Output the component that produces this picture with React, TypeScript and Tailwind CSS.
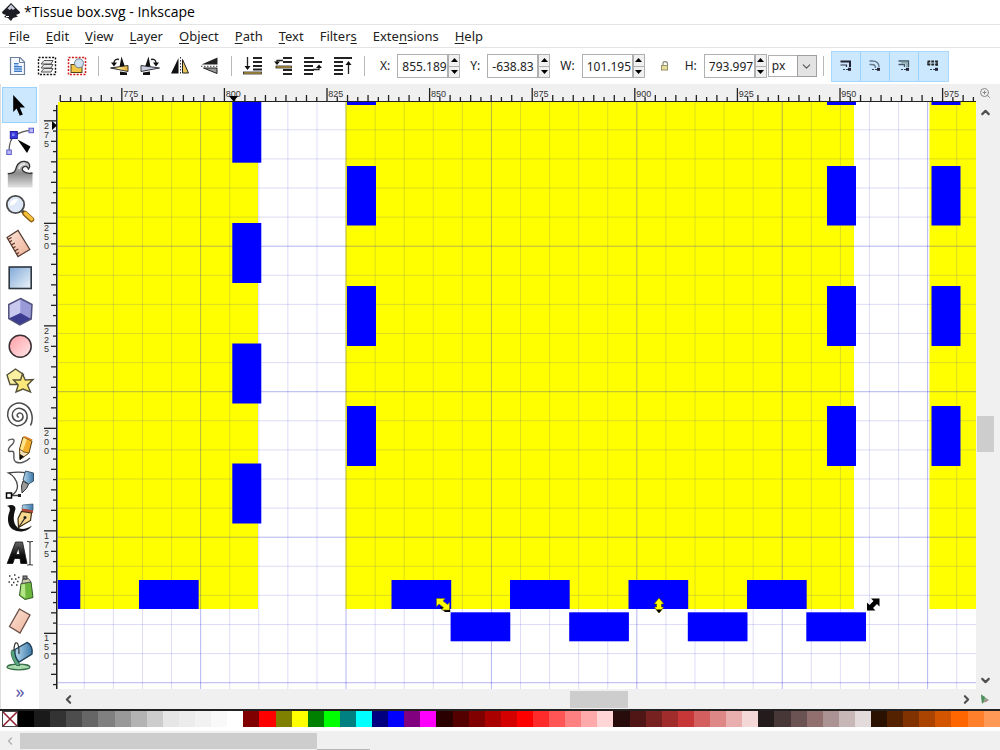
import React from "react";
import { ChevronDown, ChevronLeft, ChevronRight, ChevronUp, ZoomIn } from "lucide-react";

/* ---------- data ---------- */

const MENUS: [string, string, string][] = [
  ["", "F", "ile"],
  ["", "E", "dit"],
  ["", "V", "iew"],
  ["", "L", "ayer"],
  ["", "O", "bject"],
  ["", "P", "ath"],
  ["", "T", "ext"],
  ["Filter", "s", ""],
  ["Exte", "n", "sions"],
  ["", "H", "elp"],
];

const PALETTE =
  "000000 1a1a1a 333333 4d4d4d 666666 808080 999999 b3b3b3 cccccc e6e6e6 ececec f2f2f2 f9f9f9 ffffff 800000 ff0000 808000 ffff00 008000 00ff00 008080 00ffff 000080 0000ff 800080 ff00ff 2b0000 550000 800000 aa0000 d40000 ff0000 ff2a2a ff5555 ff8080 ffaaaa ffd5d5 280b0b 501616 782121 a02c2c c83737 d35f5f de8787 e9afaf f4d7d7 241c1c 483737 6c5353 916f6f ac9393 c8b7b7 e3dbdb 2b1100 552200 803300 aa4400 d45500 ff6600 ff7f2a ff9955".split(
    " ",
  );

type Box = [number, number, number, number];

const YELLOW: Box[] = [
  [0, 0, 200, 507],
  [287.5, 0, 508.5, 507],
  [871.5, 0, 400, 507],
];

const sideTabs = (x: number): Box[] => [
  [x, 0, 29, 3],
  [x, 64, 29, 59.5],
  [x, 184, 29, 60],
  [x, 304, 29, 60],
];

const BLUE: Box[] = [
  [174.3, 0, 29, 60.7],
  [174.3, 121, 29, 60],
  [174.3, 241.5, 29, 60],
  [174.3, 361.5, 29, 60],
  ...sideTabs(289),
  ...sideTabs(769),
  ...sideTabs(873.5),
  [0, 478, 22.3, 29],
  [81, 478, 59.7, 29],
  [333.5, 478, 59.7, 29],
  [452, 478, 59.7, 29],
  [570.5, 478, 59.7, 29],
  [689, 478, 59.7, 29],
  [392.6, 510.3, 59.7, 29],
  [511.2, 510.3, 59.7, 29],
  [629.8, 510.3, 59.7, 29],
  [748.3, 510.3, 59.7, 29],
];

/* ---------- icons ---------- */

const Svg = ({ size, children }: { size: number; children: React.ReactNode }) => (
  <svg width={size} height={size} viewBox={`0 0 ${size} ${size}`} fill="none" className="shrink-0" aria-hidden="true">
    {children}
  </svg>
);

const Defs = () => (
  <svg width="0" height="0" className="absolute" aria-hidden="true">
    <defs>
      <linearGradient id="gBlue" x1="0" y1="0" x2="1" y2="1">
        <stop offset="0" stopColor="#7fa9d6" />
        <stop offset="1" stopColor="#eef4fb" />
      </linearGradient>
      <linearGradient id="gRed" x1="0" y1="0" x2="1" y2="1">
        <stop offset="0" stopColor="#ff9ca4" />
        <stop offset="1" stopColor="#ffe9ea" />
      </linearGradient>
      <linearGradient id="gSkin" x1="0" y1="0" x2="1" y2="1">
        <stop offset="0" stopColor="#fbe6da" />
        <stop offset="1" stopColor="#eeb095" />
      </linearGradient>
      <linearGradient id="gGrey" x1="0" y1="0" x2="0" y2="1">
        <stop offset="0" stopColor="#d8d8d8" />
        <stop offset="0.45" stopColor="#8a8a8a" />
        <stop offset="1" stopColor="#e2e2e2" />
      </linearGradient>
      <linearGradient id="gGold" x1="0" y1="0" x2="1" y2="0">
        <stop offset="0" stopColor="#3a3020" />
        <stop offset="0.45" stopColor="#ffe9a0" />
        <stop offset="1" stopColor="#e0ac30" />
      </linearGradient>
      <linearGradient id="gSteel" x1="0" y1="0" x2="1" y2="0">
        <stop offset="0" stopColor="#b7dbf0" />
        <stop offset="1" stopColor="#3c78a8" />
      </linearGradient>
      <linearGradient id="gText" x1="0" y1="0" x2="0" y2="1">
        <stop offset="0" stopColor="#666" />
        <stop offset="0.6" stopColor="#111" />
        <stop offset="1" stopColor="#000" />
      </linearGradient>
    </defs>
  </svg>
);

const TOOLS: { name: string; art: React.ReactNode }[] = [
  {
    name: "Select and transform objects",
    art: <path d="M8.2 5V22L11.6 18.6L14.8 25.8L17.8 24.4L14.8 17.4H20Z" fill="#000" />,
  },
  {
    name: "Edit paths by nodes",
    art: (
      <>
        <path d="M4 26C4 17 6 12 10 9.500C15 6 20 4.500 26 4.300" stroke="#555" strokeWidth="1.200" />
        <rect x="5.300" y="5.500" width="7" height="7" fill="#3a3ad8" stroke="#2020a8" />
        <rect x="7" y="7.500" width="2.500" height="2.500" fill="#7d8cf5" />
        <rect x="24" y="2.200" width="4.500" height="4.500" fill="#b9b9f6" stroke="#5c5cd0" />
        <rect x="1.800" y="24" width="4.500" height="4.500" fill="#b9b9f6" stroke="#5c5cd0" />
        <path d="M12.500 13.500L25.500 20.500L22 27Z" fill="#000" />
      </>
    ),
  },
  {
    name: "Tweak objects",
    art: (
      <>
        <path d="M2.800 13.500C9 14 10.500 11 11.500 7C12.800 2.500 17 1 20 1.500C24.500 2 26 6 23.500 9C22.500 7 21 6 19 7C16.500 9 17.500 14 27.500 13V27.500H2.800Z" fill="url(#gGrey)" />
        <path d="M2.800 13.500C9 14 10.500 11 11.500 7C12.800 2.500 17 1 20 1.500C24.500 2 26 6 23.500 9C22.500 7 21 5.500 18.500 7C15.500 9 18 14.500 27.500 13" stroke="#333" strokeWidth="1.300" />
        <path d="M14 9C14 6 17 4 20 4" stroke="#eee" strokeWidth="1.500" />
      </>
    ),
  },
  {
    name: "Zoom in or out",
    art: (
      <>
        <path d="M17 17L21 20.500" stroke="#444" strokeWidth="3" />
        <path d="M20 19.500L26.500 25.500" stroke="#8a5c10" strokeWidth="5.500" strokeLinecap="round" />
        <path d="M20.500 19.500L26.500 25" stroke="#f3c13c" strokeWidth="3.600" strokeLinecap="round" />
        <circle cx="10.500" cy="10.500" r="8.700" fill="#dfe9f8" stroke="#4a4a4a" strokeWidth="1.800" />
        <path d="M4.500 11.500C5 7.500 8 4.500 13 5C11 9.500 8 11.500 4.500 11.500Z" fill="#fff" />
      </>
    ),
  },
  {
    name: "Measurement tool",
    art: (
      <>
        <path d="M2 8.500L13 1.500L24.800 20.500L13 27.500Z" fill="url(#gSkin)" stroke="#5a4038" strokeWidth="1.300" />
        <path d="M3 10.500L6.500 8.500M4.500 13L7 11.500M6.300 16L9.800 14M8 19L10.500 17.500M9.800 22L13.300 20M11.500 25L14 23.500" stroke="#5a3020" strokeWidth="1.200" />
      </>
    ),
  },
  {
    name: "Create rectangles and squares",
    art: <rect x="4.200" y="4" width="22" height="21.500" fill="url(#gBlue)" stroke="#2e3640" strokeWidth="1.600" />,
  },
  {
    name: "Create 3D boxes",
    art: (
      <>
        <path d="M15.500 1.500L27 7.500L26.200 22L14.800 28L3.800 21.500V7.500Z" fill="#a9a9e4" />
        <path d="M15.500 1.500V16L3.800 21.500V7.500Z" fill="#c9c9f0" />
        <path d="M15.500 1.500L27 7.500L26.200 22L15.500 16Z" fill="#9a9ad8" />
        <path d="M15.500 16L26.200 22L14.800 28L3.800 21.500Z" fill="#3c3c90" />
        <path d="M15.500 1.500L27 7.500L26.200 22L14.800 28L3.800 21.500V7.500Z" stroke="#50507c" strokeWidth="1.500" />
      </>
    ),
  },
  {
    name: "Create circles, ellipses and arcs",
    art: <circle cx="15.200" cy="14.200" r="11" fill="url(#gRed)" stroke="#3c3034" strokeWidth="1.500" />,
  },
  {
    name: "Create stars and polygons",
    art: (
      <>
        <path d="M10.500 3L18.500 8.500L15.500 18.500H5L2 9Z" fill="#faf0a0" stroke="#57523a" strokeWidth="1.400" />
        <path d="M17.500 8L20.300 14L28 13.500L22.500 19L25.500 26L18 23L11 26L13.200 19L8.500 14H15.500Z" fill="#fbe878" stroke="#57523a" strokeWidth="1.400" />
      </>
    ),
  },
  {
    name: "Create spirals",
    art: (
      <path
        d="M14 17C12.500 17.500 11.500 15.500 12.500 14.200C14 12 17.500 13 18 16C18.500 20 14 22.300 10.500 20.500C6.500 18.300 6.500 12.500 9.500 10C14 6.500 21 9 22 15C23 22 17 26.500 11 25.500C4.500 24 1.500 17 3 11.500C5 4.500 12.500 1.500 18.500 4C26 7 29.500 17 25.500 25.500"
        stroke="#4a4a4a"
        strokeWidth="1.500"
      />
    ),
  },
  {
    name: "Draw freehand lines",
    art: (
      <>
        <path d="M3 5.500C6 3.500 9.500 3.500 9 6.500C8.500 10 2.500 12 3.500 15.500C4 18 7 15 8.500 17C10 20 7 25 11 27C15 29 21 27 25 23" stroke="#555" strokeWidth="1.400" />
        <path d="M18 2L27 6L24 18L15 24.500L14.500 14Z" fill="#f3ad28" stroke="#5b4016" />
        <path d="M18.500 2.500L22 4.500L17.500 16.500L14.800 15Z" fill="#ffe48a" />
        <path d="M14.500 14L19 17L24 18L15 24.500Z" fill="#f5dfb5" stroke="#5b4016" strokeWidth="0.800" />
        <path d="M14.800 19L19 21.500L14.800 25Z" fill="#111" />
        <path d="M20 1L27.500 4.500L27 6L18 2Z" fill="#e0862c" />
      </>
    ),
  },
  {
    name: "Draw Bezier curves and straight lines",
    art: (
      <>
        <path d="M4 26.500H15M22 4C15 2.500 9 3 3.500 4C8 6 12.500 12 12.500 17C12.500 22 9 25 6 26.500" stroke="#444" strokeWidth="1.300" />
        <path d="M20.500 2L28.500 4V12L23.500 15L18 11Z" fill="url(#gSteel)" stroke="#3c5468" />
        <path d="M18 12L23.500 15.500L21.500 19.500L17 24L16.500 17Z" fill="#9a9a9a" stroke="#333" />
        <rect x="1.500" y="24" width="5" height="5" fill="#fff" stroke="#000" strokeWidth="1.500" />
        <rect x="13" y="25" width="3" height="3" fill="#222" />
      </>
    ),
  },
  {
    name: "Draw calligraphic or brush strokes",
    art: (
      <>
        <path d="M2 3C7 0.500 12 2.500 10 7.500C8 13.500 8 20.500 12.500 24.500C16 27 22 26 27 22.500C23 29 14 30 8 26.500C1.500 22 2.500 13.500 4.500 8.500C5.500 5.500 4.500 3.500 2 3Z" fill="#111" />
        <path d="M17.500 2L28 1V7.500L17 6.500Z" fill="url(#gSteel)" stroke="#35506a" strokeWidth="0.700" />
        <path d="M17.500 5.500L28 7.500V10L16 9Z" fill="#b84838" />
        <path d="M16.500 8.500L26.500 10L25.500 17.500L13.500 24.500L13 15.500Z" fill="#f7d88e" stroke="#3c2c10" strokeWidth="1.200" />
        <path d="M13.800 24L20 15" stroke="#222" strokeWidth="1.200" />
        <circle cx="20" cy="14.500" r="1.500" fill="#222" />
      </>
    ),
  },
  {
    name: "Create and edit text objects",
    art: (
      <>
        <path d="M10.500 4H17.500L22 25.500H15.800L15 20.500H9.500L7.800 25.500H2.200ZM13.500 9.500L11 16.500H14.800Z" fill="url(#gText)" stroke="#111" strokeWidth="0.800" />
        <path d="M22 3.500H24L25 4.500L26 3.500H28M25 4.500V26M22 27H24L25 26L26 27H28" stroke="#444" strokeWidth="1.200" />
      </>
    ),
  },
  {
    name: "Spray objects",
    art: (
      <>
        <path d="M16 11.500L26 10L28 25.500L20 27.500L14.500 23.500Z" fill="#6db83c" stroke="#335a24" />
        <path d="M16.500 12.500L20 12L20.500 26L15.500 23Z" fill="#b7e68a" />
        <path d="M17 11.500L17.500 7.500L23.500 6.500L26 10Z" fill="#c9cfa8" stroke="#555" />
        <rect x="18" y="4" width="4" height="3" fill="#888" stroke="#333" />
        <path d="M4 4H5.500M9 3H10.500M13 5.500H14.500M6 7H7.500M10 7H11.500M3.500 10H5M8 10.500H9.500M12 9.500H13.500M6 13H7.500M11 13H12.500" stroke="#333" strokeWidth="1.500" />
      </>
    ),
  },
  {
    name: "Erase existing paths",
    art: <path d="M14.500 2L25 8L15 26L4.500 19.500Z" fill="url(#gSkin)" stroke="#6b5048" strokeWidth="1.300" />,
  },
  {
    name: "Fill bounded areas",
    art: (
      <>
        <ellipse cx="13.500" cy="26" rx="11.500" ry="2.800" fill="#a8dcae" stroke="#3a6e48" strokeWidth="1.300" />
        <path d="M7 9C4.500 12 8 20 11.500 24.500H15C12 19 10 13 11 9Z" fill="#56a87c" stroke="#2c5c46" strokeWidth="0.800" />
        <path d="M10 8.500L22 1.500C26 3 28 8 27 13L14 21C11 18 9.500 13 10 8.500Z" fill="url(#gSteel)" stroke="#1f4058" strokeWidth="1.400" />
        <path d="M9 10C9 3 10.500 1 12 2C13.500 3 14 8 14 13" stroke="#333" strokeWidth="1.200" />
      </>
    ),
  },
];

type Cmd = { name: string; art: React.ReactNode };

const SELECT_CMDS: Cmd[] = [
  {
    name: "Select all",
    art: (
      <>
        <path d="M5.500 3.500H15L19.500 8V20.500H5.500Z" fill="#f4f8fd" stroke="#6d7f9a" strokeWidth="1.200" />
        <path d="M14.500 3.500V8.500H19.500" stroke="#6d7f9a" />
        <path d="M9 9H13.500V12H17V18H9Z" fill="#9cc2ee" />
        <path d="M9 9.500H13.500M9 12.500H17M9 15H17M9 17.500H17" stroke="#3f78c0" strokeWidth="1.200" />
      </>
    ),
  },
  {
    name: "Select all in all layers",
    art: (
      <>
        <rect x="3.500" y="3.500" width="17" height="17" stroke="#111" strokeWidth="1.400" strokeDasharray="2 1.400" />
        <path d="M6 10L9 6.500H18L16 10ZM6 14L9 10.500H18L16 14ZM6 18L9 14.500H18L16 18Z" fill="#e8e8e8" stroke="#555" />
      </>
    ),
  },
  {
    name: "Deselect",
    art: (
      <>
        <rect x="3.500" y="3.500" width="17" height="17" stroke="#d01818" strokeWidth="1.500" strokeDasharray="2 1.400" />
        <rect x="6" y="10.500" width="11" height="8" fill="#f2c64a" stroke="#54451c" />
        <circle cx="14" cy="9.300" r="4.500" fill="#cfe0f0" stroke="#708090" />
      </>
    ),
  },
];

const TRANSFORM_CMDS: Cmd[] = [
  {
    name: "Rotate 90 degrees CCW",
    art: (
      <>
        <path d="M13.500 2.500L17 13H11.500Z" fill="#111" />
        <path d="M2.500 14L20 11.500V17.500Z" fill="url(#gGold)" stroke="#222" strokeWidth="0.900" />
        <path d="M12 17.500L19 18.500V21H12Z" fill="#111" />
        <path d="M11 5.500C8.500 4.500 6 6 6 9" stroke="#222" strokeWidth="1.400" />
        <path d="M3 8.500H9L6 12.500Z" fill="#111" />
      </>
    ),
  },
  {
    name: "Rotate 90 degrees CW",
    art: (
      <>
        <path d="M10.500 2.500L7 13H12.500Z" fill="#111" />
        <path d="M21.500 14L3 11.500V17.500Z" fill="#c9cede" stroke="#222" strokeWidth="0.900" />
        <path d="M12 17.500L5 18.500V21H12Z" fill="#111" />
        <path d="M13 5.500C15.500 4.500 18 6 18 9" stroke="#222" strokeWidth="1.400" />
        <path d="M21 8.500H15L18 12.500Z" fill="#111" />
      </>
    ),
  },
  {
    name: "Flip horizontal",
    art: (
      <>
        <path d="M10.500 4V19.500H3Z" fill="#111" />
        <path d="M14.500 5.500V19H20.500Z" fill="#eac75c" stroke="#222" />
        <path d="M12.500 3V21" stroke="#333" strokeDasharray="1.500 1.500" />
      </>
    ),
  },
  {
    name: "Flip vertical",
    art: (
      <>
        <path d="M3.500 10.500L19.500 3.500V10.500Z" fill="#222" />
        <path d="M5.500 14L19 19.500V14Z" fill="#999" stroke="#222" />
        <path d="M3 12.300H20.500" stroke="#444" strokeDasharray="1.500 1.500" />
      </>
    ),
  },
];

const ORDER_CMDS: Cmd[] = [
  {
    name: "Lower selection to bottom",
    art: (
      <>
        <path d="M12 4H21M12 8H21M12 12H21M12 15.500H21" stroke="#222" strokeWidth="2" />
        <rect x="2.500" y="18" width="18" height="2" fill="#d9b54a" stroke="#222" strokeWidth="0.800" />
        <path d="M6.500 3V14" stroke="#222" strokeWidth="1.300" />
        <path d="M3.500 12H9.500L6.500 16Z" fill="#111" />
      </>
    ),
  },
  {
    name: "Lower selection one step",
    art: (
      <>
        <path d="M12 4H21M12 8H21M12 16H21M12 20H21" stroke="#222" strokeWidth="2" />
        <rect x="5" y="12" width="15.500" height="2" fill="#d9b54a" stroke="#222" strokeWidth="0.800" />
        <path d="M12 6.500H6V8" stroke="#222" strokeWidth="1.300" />
        <path d="M3 7.500H9L6 11Z" fill="#111" />
      </>
    ),
  },
  {
    name: "Raise selection one step",
    art: (
      <>
        <path d="M3 4H13M3 8H21M3 12H12M3 16H13M3 20H12" stroke="#222" strokeWidth="2" />
        <path d="M12 15.500H18V13" stroke="#222" strokeWidth="1.300" />
        <path d="M15 14H21L18 10.500Z" fill="#111" />
      </>
    ),
  },
  {
    name: "Raise selection to top",
    art: (
      <>
        <path d="M3 4H21M3 8H12M3 12H12M3 16H12M3 20H12" stroke="#222" strokeWidth="2" />
        <path d="M17.500 9V20" stroke="#222" strokeWidth="1.300" />
        <path d="M14.500 11H20.500L17.500 7Z" fill="#111" />
      </>
    ),
  },
];

const TOGGLES: Cmd[] = [
  {
    name: "Scale stroke width",
    art: (
      <>
        <path d="M6.500 7.500H16V13" stroke="#223" strokeWidth="2" />
        <path d="M6.500 11H12.500V13" stroke="#334" strokeWidth="1.200" />
      </>
    ),
  },
  {
    name: "Scale rounded corners",
    art: <path d="M6.500 7H9C14 7 16 9.500 16 13M6.500 10.500H9C11.500 10.500 12.500 12 12.500 14" stroke="#678" strokeWidth="1.300" />,
  },
  {
    name: "Transform gradients",
    art: (
      <>
        <path d="M6.500 7H16.500V13M6.500 10.500H12.500V13" stroke="#456" strokeWidth="1.300" />
        <path d="M9 8.700H15V13" stroke="#8aa" strokeWidth="1.800" />
      </>
    ),
  },
  {
    name: "Transform patterns",
    art: (
      <>
        <path d="M6.500 7.500H17M6.500 10.500H17" stroke="#222" strokeWidth="2" strokeDasharray="2.800 1" />
        <path d="M7 8V11M16 8V12" stroke="#222" strokeWidth="1.200" />
      </>
    ),
  },
];

/* ---------- toolbar pieces ---------- */

const Separator = () => <div className="mx-[6px] h-[20px] w-px shrink-0 bg-[#b8b8b8]" />;

const CmdGroup = ({ items }: { items: Cmd[] }) => (
  <div className="flex shrink-0">
    {items.map((c) => (
      <button key={c.name} type="button" aria-label={c.name} className="flex h-[30px] w-[30px] items-center justify-center">
        <Svg size={24}>{c.art}</Svg>
      </button>
    ))}
  </div>
);

const Spin = ({ id, label, value }: { id: string; label: string; value: string }) => (
  <div className="flex shrink-0 items-center gap-[7px]">
    <label htmlFor={id} className="text-[#222]">
      {label}:
    </label>
    <div className="flex h-[24px]">
      <input
        id={id}
        defaultValue={value}
        className="h-[24px] w-[51px] border border-[#b0b0b0] bg-white pl-[4px] text-[12px] text-[#222] outline-none"
      />
      <div className="flex w-[12px] flex-col border border-[#b0b0b0] bg-[#f0f0f0]">
        <button type="button" aria-label={`Increase ${label}`} className="flex flex-1 items-center justify-center border-b border-[#b0b0b0]">
          <svg width="7" height="4" viewBox="0 0 7 4" aria-hidden="true">
            <path d="M0 4L3.500 0L7 4Z" fill="#000" />
          </svg>
        </button>
        <button type="button" aria-label={`Decrease ${label}`} className="flex flex-1 items-center justify-center">
          <svg width="7" height="4" viewBox="0 0 7 4" aria-hidden="true">
            <path d="M0 0L3.500 4L7 0Z" fill="#000" />
          </svg>
        </button>
      </div>
    </div>
  </div>
);

/* ---------- rulers and canvas ---------- */

const range = (n: number) => Array.from({ length: n }, (_, i) => i);

const TopRuler = () => (
  <svg className="block h-full w-full" aria-hidden="true">
    {range(90).map((i) => {
      const x = 2.1 + 10.26 * i;
      const major = i % 10 === 6;
      const h = major ? 13 : i % 2 === 0 ? 6 : 4;
      return (
        <g key={i}>
          <rect x={x - 0.5} y={17 - h} width="1.3" height={h} fill="#222" />
          {major && (
            <text x={x + 1.5} y="13" fontSize="9" fill="#333" fontFamily="Liberation Sans, sans-serif">
              {760 + 2.5 * i}
            </text>
          )}
        </g>
      );
    })}
    <rect x="2" y="17" width="100%" height="1.2" fill="#222" />
    <path d="M171 12H180L175.500 17.500Z" fill="#000" />
  </svg>
);

const LeftRuler = () => (
  <svg className="block h-full w-full" aria-hidden="true">
    {range(57).map((i) => {
      const y = 8.45 + 10.25 * i;
      const major = i % 10 === 1;
      const w = major ? 13 : i % 2 === 1 ? 6 : 4;
      return (
        <g key={i}>
          <rect x={18 - w} y={y - 0.5} width={w} height="1.3" fill="#222" />
          {major &&
            String(277.5 - 2.5 * i)
              .split("")
              .map((d, k) => (
                <text key={k} x="5" y={y + 8 + k * 9} fontSize="9" fill="#333" fontFamily="Liberation Sans, sans-serif">
                  {d}
                </text>
              ))}
        </g>
      );
    })}
    <rect x="17" y="3" width="1.500" height="100%" fill="#222" />
    <path d="M13 19V28L18 23.500Z" fill="#000" />
  </svg>
);

const Canvas = () => (
  <svg className="block h-full w-full bg-white" role="img" aria-label="Tissue box drawing">
    {YELLOW.map(([x, y, w, h], i) => (
      <rect key={i} x={x} y={y} width={w} height={h} fill="#ffff00" />
    ))}
    {range(80).map((i) => {
      const x = 26.3 + 29.08 * i;
      return <rect key={i} x={x - 0.5} y="0" width="1" height="100%" fill="#1a1ad0" fillOpacity={i % 5 === 4 ? 0.32 : 0.15} />;
    })}
    {range(50).map((i) => {
      const y = 27.8 + 29.1 * i;
      return <rect key={i} x="0" y={y - 0.5} width="100%" height="1" fill="#1a1ad0" fillOpacity={i % 5 === 4 ? 0.32 : 0.15} />;
    })}
    {BLUE.map(([x, y, w, h], i) => (
      <rect key={i} x={x} y={y} width={w} height={h} fill="#0000ff" />
    ))}
    <path d="M382 505L387 509.500H392L391.500 507Z" fill="#000" stroke="#000" />
    <path d="M378.500 496.500H387L385 499L389.500 502.500L391.500 500.500V508H383.500L385.500 505.500L381 502L378.500 504.500Z" fill="#ffff00" stroke="#6b6b20" strokeWidth="0.600" />
    <path d="M601 496L606 502H603.500V505H606L601 511L596 505H598.500V502H596Z" fill="#ffff00" stroke="#444400" strokeWidth="0.600" />
    <path d="M598 507.500H604L601 511Z" fill="#000" />
    <path d="M821.500 496.500V504.500L819 502L815 506L817.500 508.500H809V500.500L811.500 503L815.500 499L813 496.500Z" fill="#000" />
  </svg>
);

/* ---------- app ---------- */

export default function App() {
  return (
    <div className="flex h-screen flex-col overflow-hidden bg-white font-['Noto_Sans',sans-serif] text-[12px] leading-[16px] text-[#222]">
      <Defs />

      <header className="flex h-[24px] shrink-0 items-center gap-[3px] pl-px">
        <Svg size={20}>
          <path d="M10 1L19 10C19.500 12 16 12 15 13L17 14.500L12 16L10 19L7 16L3 15L5 13C3 12 1 12 1 10Z" fill="#1c1c24" />
          <path d="M10 2.500L14 6.500L12 8L10.500 6.500L9 8L6.500 6.500Z" fill="#c8cad8" />
          <path d="M5 14.500H8" stroke="#fff" />
        </Svg>
        <h1 className="font-['Open_Sans',sans-serif] text-[14px] text-black">*Tissue box.svg - Inkscape</h1>
      </header>

      <nav className="flex h-[24px] shrink-0 items-center gap-[16px] border-y border-[#e4e4e4] pl-[9px] text-[13px]">
        {MENUS.map(([a, k, b]) => (
          <button key={a + k + b} type="button">
            {a}
            <span className="underline underline-offset-2">{k}</span>
            {b}
          </button>
        ))}
      </nav>

      <div className="flex h-[36px] shrink-0 items-center pl-[2px]">
        <CmdGroup items={SELECT_CMDS} />
        <Separator />
        <CmdGroup items={TRANSFORM_CMDS} />
        <Separator />
        <CmdGroup items={ORDER_CMDS} />
        <Separator />
        <div className="flex shrink-0 items-center gap-[10px] pl-[9px]">
          <Spin id="pos-x" label="X" value="855.189" />
          <Spin id="pos-y" label="Y" value="-638.83" />
          <Spin id="size-w" label="W" value="101.195" />
          <button type="button" aria-label="Lock width and height" className="flex h-[20px] w-[20px] items-center justify-center">
            <svg width="10" height="12" viewBox="0 0 10 12" fill="none" aria-hidden="true">
              <path d="M3 5V3C3 1 7.500 1 7.500 3.500V6" stroke="#8a8a78" strokeWidth="1.200" />
              <rect x="1.500" y="5.500" width="6" height="4.500" fill="#e6dc9c" stroke="#9a9460" />
            </svg>
          </button>
          <Spin id="size-h" label="H" value="793.997" />
        </div>
        <div className="relative ml-px flex shrink-0">
          <select
            aria-label="Unit"
            defaultValue="px"
            className="h-[22px] w-[49px] appearance-none rounded-none border border-[#b0b0b0] bg-white pl-[3px] text-[12px] text-[#222] outline-none"
          >
            <option>px</option>
            <option>mm</option>
          </select>
          <span className="pointer-events-none absolute right-0 top-0 flex h-[22px] w-[20px] items-center justify-center border border-[#a0a0a0] bg-[#e3e3e3]">
            <ChevronDown size={13} strokeWidth={2} color="#555" />
          </span>
        </div>
        <Separator />
        <div className="ml-px flex shrink-0 divide-x divide-[#99d1ff] border border-[#a8d8ff] bg-[#cce8ff]">
          {TOGGLES.map((c) => (
            <button key={c.name} type="button" aria-pressed="true" aria-label={c.name} className="flex h-[29px] w-[29px] items-center justify-center">
              <Svg size={24}>
                {c.art}
                <path d="M9 15.500H11M12 15.500H14" stroke="#345" strokeWidth="1.200" />
                <rect x="14" y="13.800" width="3" height="3" fill="#223" />
              </Svg>
            </button>
          ))}
        </div>
      </div>

      <div className="flex min-h-0 flex-1">
        <aside className="flex w-[39px] shrink-0 flex-col border-l border-[#ddd] pt-[3px]">
          <div className="flex min-h-0 flex-1 flex-col px-px">
            {TOOLS.map((t, i) => (
              <button
                key={t.name}
                type="button"
                aria-label={t.name}
                aria-pressed={i === 0}
                className={
                  i === 0
                    ? "flex min-h-0 w-[35px] flex-1 items-center justify-center border border-[#99d1ff] bg-[#cce8ff]"
                    : "flex min-h-0 w-[35px] flex-1 items-center justify-center"
                }
              >
                <Svg size={30}>{t.art}</Svg>
              </button>
            ))}
          </div>
          <button type="button" aria-label="More tools" className="h-[36px] shrink-0 text-[18px] leading-[32px] text-[#5a5aa8]">
            »
          </button>
        </aside>

        <main className="grid min-w-0 flex-1 grid-cols-[19px_minmax(0,1fr)_24px] grid-rows-[18px_minmax(0,1fr)_20px] bg-[#f0f0f0]">
          <div />
          <div className="overflow-hidden">
            <TopRuler />
          </div>
          <button type="button" aria-label="Zoom drawing" className="flex items-center justify-center pr-[6px]">
            <ZoomIn size={12} strokeWidth={2} color="#888" />
          </button>

          <div className="overflow-hidden">
            <LeftRuler />
          </div>
          <div className="overflow-hidden">
            <Canvas />
          </div>
          <div className="flex flex-col items-center pr-[6px]">
            <button type="button" aria-label="Scroll up" className="flex h-[20px] shrink-0 items-center justify-center">
              <ChevronUp size={13} strokeWidth={4} color="#505050" />
            </button>
            <div className="grow-[293]" />
            <div className="w-[17px] grow-[36] bg-[#cdcdcd]" />
            <div className="grow-[219]" />
            <button type="button" aria-label="Scroll down" className="flex h-[18px] shrink-0 items-center justify-center">
              <ChevronDown size={13} strokeWidth={4} color="#505050" />
            </button>
          </div>

          <div />
          <div className="flex items-center">
            <button type="button" aria-label="Scroll left" className="flex w-[20px] shrink-0 items-center justify-center">
              <ChevronLeft size={13} strokeWidth={4} color="#505050" />
            </button>
            <div className="grow-[492]" />
            <div className="h-[17px] grow-[58] bg-[#cdcdcd]" />
            <div className="grow-[328]" />
            <button type="button" aria-label="Scroll right" className="flex w-[20px] shrink-0 items-center justify-center">
              <ChevronRight size={13} strokeWidth={4} color="#505050" />
            </button>
          </div>
          <button type="button" aria-label="Color management" className="flex items-center justify-center pr-[6px]">
            <svg width="10" height="10" viewBox="0 0 10 10" aria-hidden="true">
              <path d="M1 0.500L9 6L2 9.500Z" fill="#8aa88c" />
              <path d="M1 0.500L5 3L3 9L2 9.500Z" fill="#4f8f5c" />
              <path d="M5 6L9 6L5 8.500Z" fill="#b08a8a" />
            </svg>
          </button>
        </main>
      </div>

      <div className="flex h-[18px] shrink-0 border-t-2 border-[#222] pl-[2px]">
        <button type="button" aria-label="No fill" className="w-[16px] shrink-0 border border-[#444] bg-white">
          <svg className="block h-full w-full" viewBox="0 0 14 14" preserveAspectRatio="none" aria-hidden="true">
            <path d="M0 0L14 14M14 0L0 14" stroke="#8c1c2c" strokeWidth="1.500" />
          </svg>
        </button>
        {PALETTE.map((c, i) => (
          <button key={i} type="button" aria-label={`#${c}`} className="min-w-0 flex-1" style={{ backgroundColor: `#${c}` }} />
        ))}
      </div>

      <div className="mt-[4px] flex h-[19px] shrink-0 items-center bg-[#f0f0f0]">
        <button type="button" aria-label="Scroll palette left" className="flex w-[20px] shrink-0 items-center justify-center">
          <ChevronLeft size={12} strokeWidth={3} color="#b4b4b4" />
        </button>
        <div className="h-[16px] grow-[297] bg-[#cdcdcd]" />
        <div className="h-px grow-[53] self-end bg-[#b8b8b8]" />
        <div className="grow-[630]" />
      </div>
    </div>
  );
}
